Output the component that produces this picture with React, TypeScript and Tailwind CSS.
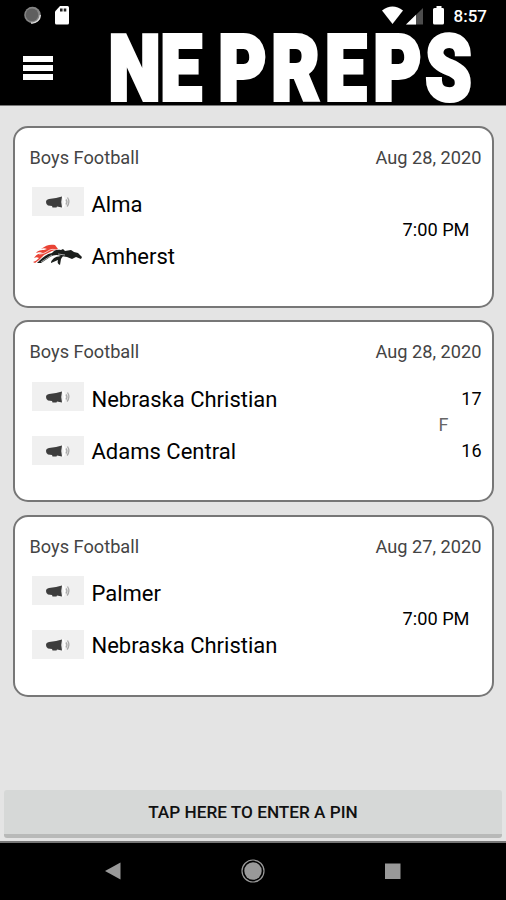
type Team = {
  name: string
  score?: string
  logo?: 'bronco'
}

type Game = {
  sport: string
  date: string
  status: string
  final?: boolean
  teams: Team[]
}

const games: Game[] = [
  {
    sport: 'Boys Football',
    date: 'Aug 28, 2020',
    status: '7:00 PM',
    teams: [{ name: 'Alma' }, { name: 'Amherst', logo: 'bronco' }],
  },
  {
    sport: 'Boys Football',
    date: 'Aug 28, 2020',
    status: 'F',
    final: true,
    teams: [
      { name: 'Nebraska Christian', score: '17' },
      { name: 'Adams Central', score: '16' },
    ],
  },
  {
    sport: 'Boys Football',
    date: 'Aug 27, 2020',
    status: '7:00 PM',
    teams: [{ name: 'Palmer' }, { name: 'Nebraska Christian' }],
  },
]

function StatusBar() {
  return (
    <div className="flex h-8 items-center justify-between pl-[23px] pr-[19px] text-white">
      <div className="flex items-center gap-[13px]">
        <svg width="19" height="20" viewBox="0 0 19 20">
          <circle cx="9.5" cy="9" r="8.3" fill="#858585" />
          <path d="M17.3 9A8.2 8.2 0 0 1 8 17" fill="none" stroke="#ddd" strokeWidth="1.4" />
          <circle cx="9" cy="8.7" r="6.3" fill="#5f5f5f" />
        </svg>
        <svg width="15" height="20" viewBox="0 0 15 20">
          <path d="M5 0h7.500Q14 0 14 1.500V17q0 1.500-1.500 1.500h-11Q0 18.500 0 17V5.500z" fill="#fff" />
          <path d="M5 2.500h2.600v3H5zM8.700 2.500h2.600v3H8.700z" fill="#222" />
        </svg>
      </div>
      <div className="flex items-center">
        <svg width="62" height="20" viewBox="0 0 62 20">
          <path d="M0 4.500Q10.500-3.500 21 4.500L10.500 18z" fill="#fff" />
          <path d="M24 18.500L41 2v16.500z" fill="#4d4d4d" />
          <path d="M24 18.500l10-9.700v9.700z" fill="#fff" />
          <path d="M52.500 2h2V0h5v2h1.500q1 0 1 1.500V17q0 1.500-1.500 1.500h-8q-1.500 0-1.500-1.500V3.500q0-1.500 1.500-1.500z" fill="#fff" />
        </svg>
        <span className="ml-[10px] text-[17px] font-medium leading-none">8:57</span>
      </div>
    </div>
  )
}

function Header() {
  return (
    <header className="flex h-[74px] items-start border-b border-[#777] pl-[23px]">
      <button aria-label="Menu" className="mt-[24px] flex w-[30px] flex-col gap-[3px]">
        <span className="h-[6px] w-full bg-white" />
        <span className="h-[6px] w-full bg-white" />
        <span className="h-[6px] w-full bg-white" />
      </button>
      <svg className="ml-[53px] overflow-visible" width="380" height="73" viewBox="0 0 380 73">
        <text
          x="3 67 110 138.500 204 270.500 330 394"
          y="68"
          transform="scale(.81 1)"
          fill="#fff"
          stroke="#fff"
          strokeWidth="4"
          fontSize="91.500"
          fontWeight="900"
        >
          NE PREPS
        </text>
      </svg>
    </header>
  )
}

function Megaphone() {
  return (
    <svg className="h-[29px] w-[52px] bg-[#f0f0f0]" viewBox="0 0 52 29">
      <path d="M14 15q0-2.500 3-3l7-1 6-1.500q-1.500 5.500 0 11l-5-1-.5 1h-4l-.5-1.500-4-.5q-2-1-2-3.500z" fill="#3d3d3d" />
      <path d="M30 9.500q3.500 5.500 0 11l2 0q2-5.500 0-11z" fill="#fff" />
      <path d="M34 12.500q2 2.500 0 5M35.500 10.500q3 4.500-.5 9" fill="none" stroke="#aaa" strokeWidth="1.300" />
    </svg>
  )
}

function Bronco() {
  return (
    <svg className="h-[29px] w-[52px]" viewBox="0 0 52 29">
      <path d="M1 23c3-1 4-2 6-4-2-1-3-1-5 0 3-5 6-4 9-5-3-1-4-1-7 0 3-4 7-2 11-4-2-1-4-1-6 0 5-4 9-5 14-4l3 4-6 2-8 4-5 5-4 3z" fill="#e94335" />
      <path d="M7 15c4 0 6-1 9-3 3-2 5-2 8-1" fill="none" stroke="#fff" strokeWidth=".7" />
      <path d="M5 24c4-4 9-9 15-10 2-3 5-4 9-3l2-1 2 2 6-1 3 2 4 1 4 4-1 2-5-2-4 2-5-2-6-1c-4-2-8-1-11 1l-9 6z" fill="#1c1f1d" />
      <path d="M19 23c2-4 5-6 12-6l-2 3-1 6c-2-1-3-2-2-5l-7 3z" fill="#1c1f1d" />
      <path d="M9 23l11-7M26 15l7 1" fill="none" stroke="#fff" strokeWidth=".6" />
    </svg>
  )
}

function GameCard({ game }: { game: Game }) {
  return (
    <section className="h-[182px] rounded-[15px] border-2 border-[#777] bg-white pl-[15px] pr-[10px] pt-[18px]">
      <div className="flex justify-between text-[18.200px] leading-6 text-[#444]">
        <span>{game.sport}</span>
        <span>{game.date}</span>
      </div>
      <div className="mt-[8.500px] flex justify-between">
        <div className="pl-[2px]">
          {game.teams.map((team, i) => (
            <div key={team.name} className="flex h-[52px] items-center gap-2">
              <div className={i === 0 || team.logo ? '-mt-[5px]' : '-mt-px'}>
                {team.logo ? <Bronco /> : <Megaphone />}
              </div>
              <span className="pt-px text-[22px] text-black">{team.name}</span>
            </div>
          ))}
        </div>
        {game.final ? (
          <div className="flex flex-col items-end text-[18px] leading-[26px]">
            <span className="mt-[13px]">{game.teams[0].score}</span>
            <span className="mr-[33px] text-[#666]">{game.status}</span>
            <span>{game.teams[1].score}</span>
          </div>
        ) : (
          <span className="mr-[12px] mt-[39px] text-[18.200px] leading-[26px]">{game.status}</span>
        )}
      </div>
    </section>
  )
}

function NavBar() {
  return (
    <nav className="flex h-[59px] items-center justify-center gap-[117px] border-t-2 border-[#777] bg-black pb-[2px]">
      <svg width="22" height="24" viewBox="0 0 22 24">
        <path d="M3 12L18.500 3.500v17z" fill="#999" />
      </svg>
      <svg width="24" height="24" viewBox="0 0 24 24">
        <circle cx="12" cy="12" r="11" fill="none" stroke="#999" strokeWidth="1.200" />
        <circle cx="12" cy="12" r="8.700" fill="#999" />
      </svg>
      <svg width="22" height="24" viewBox="0 0 22 24">
        <path d="M3 4.500h15.500v15.500H3z" fill="#999" />
      </svg>
    </nav>
  )
}

function App() {
  return (
    <div className="flex h-[900px] w-[506px] flex-col bg-[#e4e4e4] font-['Roboto',sans-serif]">
      <div className="bg-black">
        <StatusBar />
        <Header />
      </div>
      <main className="flex flex-1 flex-col gap-[12.500px] px-[12.500px] pt-[19.500px]">
        {games.map((game, i) => (
          <GameCard key={i} game={game} />
        ))}
      </main>
      <div className="px-1 pb-[3px]">
        <button className="block h-[48px] w-full rounded-[3px] border-b-4 border-[#b8b9b8] bg-[#d6d8d7] pt-[2px] text-[17.200px] font-medium text-[#111]">
          TAP HERE TO ENTER A PIN
        </button>
      </div>
      <NavBar />
    </div>
  )
}

export default App
